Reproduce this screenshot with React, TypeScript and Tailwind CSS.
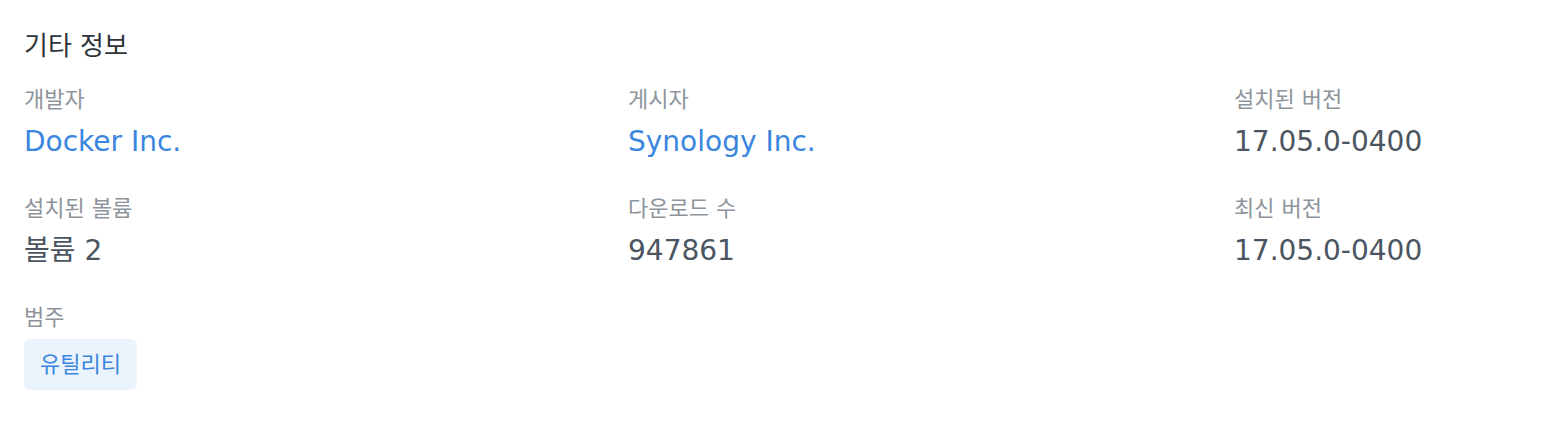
import React from "react";

const font = { fontFamily: '"DejaVu Sans", "Noto Sans CJK KR", sans-serif' };

function Field({ label, value, link }: { label: string; value: string; link?: boolean }) {
  return (
    <div className="flex flex-col">
      <div className="text-[22px] leading-[28px] text-[#8e949b]">{label}</div>
      <div className={`mt-[10px] text-[28px] leading-[36px] ${link ? "text-[#3a86df]" : "text-[#4b5561]"}`}>{value}</div>
    </div>
  );
}

export default function App() {
  return (
    <div className="w-[1564px] h-[426px] bg-white px-6 pt-[30px]" style={font}>
      <div className="text-[26px] leading-[32px] text-[#2f3439]">기타 정보</div>
      <div className="mt-[24px] grid grid-cols-[604px_606px_1fr] gap-y-[35px]">
        <Field label="개발자" value="Docker Inc." link />
        <Field label="게시자" value="Synology Inc." link />
        <Field label="설치된 버전" value="17.05.0-0400" />
        <Field label="설치된 볼륨" value="볼륨 2" />
        <Field label="다운로드 수" value="947861" />
        <Field label="최신 버전" value="17.05.0-0400" />
        <div className="flex flex-col">
          <div className="text-[22px] leading-[28px] text-[#8e949b]">범주</div>
          <div className="mt-[7px]">
            <span className="inline-flex h-[51px] items-center rounded-[6px] bg-[#ebf3fd] px-4 text-[22px] text-[#3a86df]">유틸리티</span>
          </div>
        </div>
      </div>
    </div>
  );
}
